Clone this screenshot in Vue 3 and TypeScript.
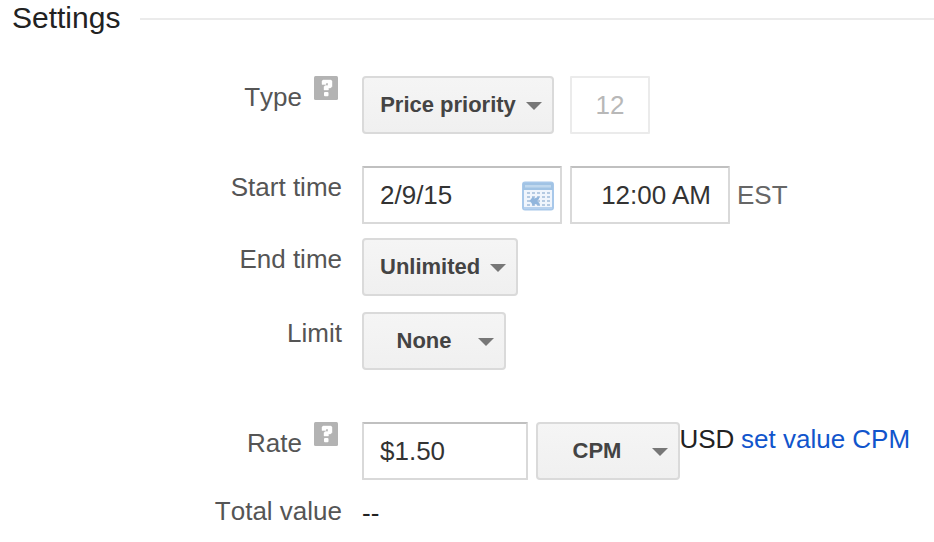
<script setup lang="ts">
import { ref } from 'vue'

const priority = ref('12')
const startDate = ref('2/9/15')
const startTime = ref('12:00 AM')
const rate = ref('$1.50')

const helpMark = 'M9 4H17L18 5V10.5L16.5 12H14.5V14H10V10.5L11.5 9.5H14V7H12V8.5H8V5Z'
const dayRows = [13, 17, 21, 25]
const dayCols = [5, 10, 15, 20, 25]
</script>

<template>
  <main class="settings">
    <header class="heading">
      <h2>Settings</h2>
      <span class="rule"></span>
    </header>

    <section class="row type">
      <div class="label">
        Type
        <svg class="help" viewBox="0 0 24 24">
          <rect width="24" height="24" rx="1.5" fill="#b3b3b3" />
          <path :d="helpMark" fill="#fff" stroke="#fff" stroke-width="0.4" />
          <rect x="10" y="16" width="4.5" height="4.2" rx="1" fill="#fff" />
        </svg>
      </div>
      <button class="select w-type"><span>Price priority</span><i class="arrow"></i></button>
      <input v-model="priority" class="field priority" disabled />
    </section>

    <section class="row start">
      <div class="label">Start time</div>
      <div class="field date">
        <input v-model="startDate" />
        <svg class="calendar" viewBox="0 0 32 30">
          <rect x="1" y="1.5" width="30" height="27" rx="2" fill="#f0f5fc" stroke="#a8c8ea" stroke-width="2" />
          <path d="M1 2H31V9H1Z" fill="#a1c3e4" />
          <path d="M3 4H29V6.5H3Z" fill="#c0d8ee" />
          <path d="M2 27H30" stroke="#b7d1ee" stroke-width="2" />
          <g fill="#b5cae2">
            <template v-for="y in dayRows" :key="y">
              <rect v-for="x in dayCols" :key="x" :x="x" :y="y - 2" width="3" height="2" />
            </template>
          </g>
          <path d="M7.5 20L11 15.5L12.5 17.5L17 15.5V18L15 20L17.5 22V24.5L13 23L11 25L9.5 22Z" fill="#91b5dc" />
        </svg>
      </div>
      <input v-model="startTime" class="field time" />
      <span class="zone">EST</span>
    </section>

    <section class="row end">
      <div class="label">End time</div>
      <button class="select w-end"><span>Unlimited</span><i class="arrow"></i></button>
    </section>

    <section class="row limit">
      <div class="label">Limit</div>
      <button class="select w-small"><span>None</span><i class="arrow"></i></button>
    </section>

    <section class="row rate">
      <div class="label">
        Rate
        <svg class="help" viewBox="0 0 24 24">
          <rect width="24" height="24" rx="1.5" fill="#b3b3b3" />
          <path :d="helpMark" fill="#fff" stroke="#fff" stroke-width="0.4" />
          <rect x="10" y="16" width="4.5" height="4.2" rx="1" fill="#fff" />
        </svg>
      </div>
      <input v-model="rate" class="field price" />
      <button class="select w-small unit"><span>CPM</span><i class="arrow"></i></button>
      <div class="currency">USD <a>set value CPM</a></div>
    </section>

    <section class="row total">
      <div class="label">Total value</div>
      <span class="dashes">--</span>
    </section>
  </main>
</template>

<style>
body {
  background: #fff;
}
</style>

<style scoped>
.settings {
  box-sizing: border-box;
  height: 542px;
  overflow: hidden;
  font: 26px/30px "Liberation Sans", Arial, sans-serif;
  font-kerning: none;
  color: #222;
}

.heading {
  display: flex;
  align-items: center;
  height: 38px;
  padding-left: 12px;
}

h2 {
  width: 128px;
  margin: 0;
  padding-bottom: 2px;
  font-size: 30px;
  line-height: 34px;
  font-weight: 400;
}

.rule {
  flex: 1;
  height: 2px;
  background: #ebebeb;
}

.row {
  display: flex;
  align-items: flex-start;
  height: 58px;
  white-space: nowrap;
}

.type {
  margin-top: 38px;
}

.start {
  margin-top: 32px;
}

.end {
  margin-top: 14px;
}

.limit {
  margin-top: 16px;
}

.rate {
  margin-top: 52px;
}

.total {
  margin-top: 10px;
}

.label {
  box-sizing: border-box;
  display: flex;
  justify-content: flex-end;
  width: 342px;
  margin-right: 20px;
  padding-top: 6px;
  color: #555;
}

.help {
  width: 24px;
  height: 24px;
  margin: -6px 4px 0 12px;
}

.select {
  box-sizing: border-box;
  display: flex;
  align-items: center;
  gap: 10px;
  height: 58px;
  padding: 0 10px 0 16px;
  border: 2px solid #dadada;
  border-radius: 4px;
  background: linear-gradient(#f5f5f5, #f0f0f0);
  color: #444;
  font: bold 22px/26px "Liberation Sans", Arial, sans-serif;
}

.select span {
  flex: 1;
  text-align: center;
}

.unit {
  padding-left: 14px;
}

.arrow {
  margin-top: 2px;
  border: 8px solid transparent;
  border-top-color: #777;
  border-bottom: 0;
}

.w-type {
  width: 192px;
}

.w-end {
  width: 156px;
}

.w-small {
  width: 144px;
}

.field {
  box-sizing: border-box;
  height: 58px;
  padding: 0 16px;
  border: 2px solid #d9d9d9;
  border-top-color: #c0c0c0;
  border-radius: 1px;
  background: #fff;
  color: #333;
  font: 26px/30px "Liberation Sans", Arial, sans-serif;
}

.priority {
  width: 80px;
  margin-left: 16px;
  border-color: #ebebeb;
  color: #b8b8b8;
  text-align: center;
  padding: 0;
}

.date {
  display: flex;
  align-items: center;
  width: 200px;
  padding-right: 6px;
}

.date input {
  flex: 1;
  min-width: 0;
  height: 30px;
  padding: 0;
  border: 0;
  outline: 0;
  background: none;
  color: inherit;
  font: inherit;
}

.calendar {
  width: 32px;
  height: 30px;
  margin-top: 2px;
}

.time {
  width: 160px;
  margin-left: 8px;
  padding-right: 17px;
  text-align: right;
}

.zone {
  margin-left: 7px;
  padding-top: 14px;
  color: #666;
}

.price {
  width: 166px;
  margin-right: 8px;
}

.currency {
  padding-top: 2px;
  margin-left: -0.5px;
}

.currency a {
  margin-left: -0.6px;
  color: #15c;
}

.dashes {
  padding-top: 8px;
}
</style>
